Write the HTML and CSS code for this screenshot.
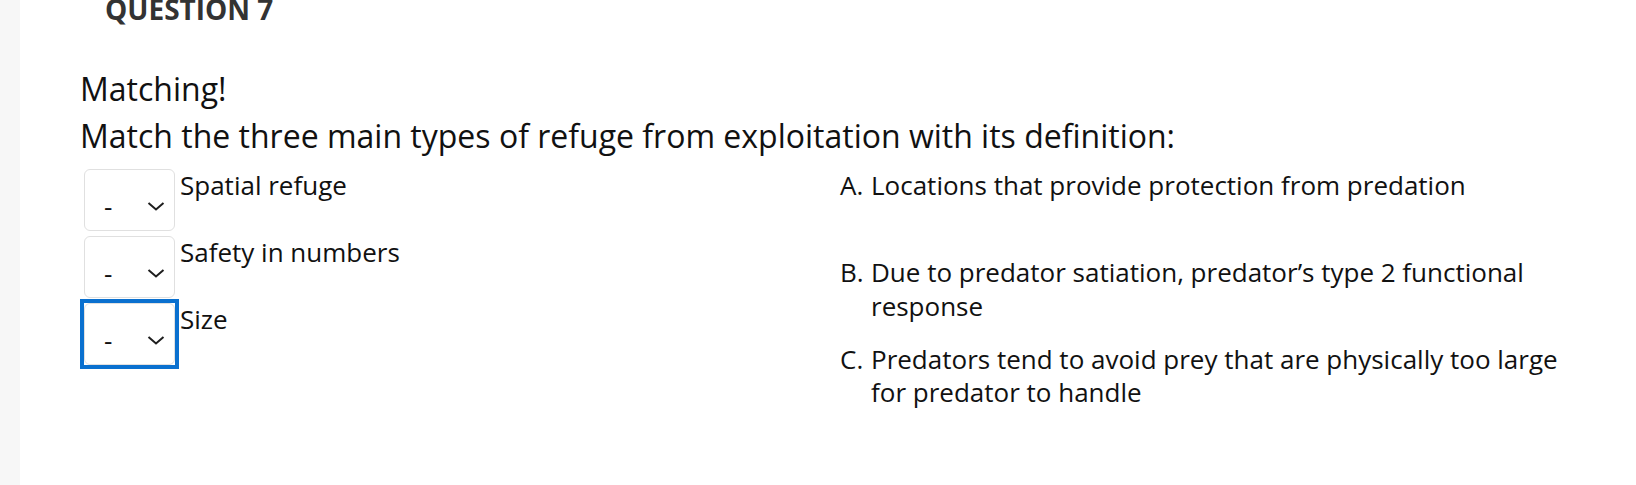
FILE: index.html
```html
<!DOCTYPE html>
<html lang="en">
<head>
<meta charset="utf-8">
<title>Question 7</title>
<link rel="stylesheet" href="styles.css">
</head>
<body>
<main class="panel">
  <h2 class="q-title">QUESTION 7</h2>
  <div class="q-text">
    <p>Matching!</p>
    <p>Match the three main types of refuge from exploitation with its definition:</p>
  </div>
  <div class="match">
    <div class="prompts">
      <div class="prompt">
        <div class="sel-wrap"><div class="sel"><span class="sel-val">-</span><svg class="chev" width="18" height="9" viewBox="0 0 18 9"><polyline points="1.5,1 9,7.5 16.5,1" fill="none" stroke="#1e1e1e" stroke-width="2"/></svg></div></div>
        <span class="prompt-label">Spatial refuge</span>
      </div>
      <div class="prompt">
        <div class="sel-wrap"><div class="sel"><span class="sel-val">-</span><svg class="chev" width="18" height="9" viewBox="0 0 18 9"><polyline points="1.5,1 9,7.5 16.5,1" fill="none" stroke="#1e1e1e" stroke-width="2"/></svg></div></div>
        <span class="prompt-label">Safety in numbers</span>
      </div>
      <div class="prompt">
        <div class="sel-wrap focused"><div class="sel"><span class="sel-val">-</span><svg class="chev" width="18" height="9" viewBox="0 0 18 9"><polyline points="1.5,1 9,7.5 16.5,1" fill="none" stroke="#1e1e1e" stroke-width="2"/></svg></div></div>
        <span class="prompt-label">Size</span>
      </div>
    </div>
    <ol class="answers">
      <li class="answer"><span class="ans-key">A.</span><span class="ans-text">Locations that provide protection from predation</span></li>
      <li class="answer"><span class="ans-key">B.</span><span class="ans-text">Due to predator satiation, predator’s type 2 functional response</span></li>
      <li class="answer"><span class="ans-key">C.</span><span class="ans-text">Predators tend to avoid prey that are physically too large for predator to handle</span></li>
    </ol>
  </div>
</main>
</body>
</html>
```
FILE: styles.css
```css
html, body {
  margin: 0;
  padding: 0;
}
body {
  background: #f7f7f7;
  font-family: "Open Sans", "Liberation Sans", sans-serif;
  color: #111;
  height: 485px;
  overflow: hidden;
}
.panel {
  display: flow-root;
  margin-left: 20px;
  background: #fff;
  min-height: 485px;
  padding: 0 36px 0 60px;
  box-sizing: border-box;
}
.q-title {
  margin: -10px 0 0 25px;
  font-size: 28px;
  font-weight: 700;
  line-height: 38px;
  color: #333;
}
.q-text {
  margin-top: 38px;
  font-size: 32px;
  line-height: 46.7px;
  color: #111;
}
.q-text p {
  margin: 0;
}
.match {
  margin-top: 10px;
  display: grid;
  grid-template-columns: 1fr 1fr;
  font-size: 26px;
  line-height: 33.4px;
}
.prompts {
  display: flex;
  flex-direction: column;
  gap: 5px;
}
.prompt {
  display: flex;
  align-items: flex-start;
  gap: 5px;
}
.sel-wrap {
  padding: 0 0 0 4px;
}
.sel-wrap.focused {
  outline: 4px solid #0a70cf;
  outline-offset: 0;
  margin-left: 4px;
  padding: 0;
}
.sel {
  width: 91px;
  height: 62px;
  box-sizing: border-box;
  border: 1.5px solid #e0e0e0;
  border-radius: 6px;
  background: #fff;
  display: flex;
  align-items: center;
  justify-content: space-between;
  padding: 12px 9px 0 19px;
}
.sel-val {
  font-size: 26px;
  line-height: 1;
  color: #111;
}
.chev {
  display: block;
}
.prompt-label {
  color: #111;
}
.answers {
  list-style: none;
  margin: 0;
  padding: 0;
}
.answer {
  display: flex;
  min-height: 66.8px;
  margin-bottom: 20px;
}
.ans-key {
  flex: 0 0 31px;
}
.ans-text {
  flex: 1;
  max-width: 700px;
}
```
